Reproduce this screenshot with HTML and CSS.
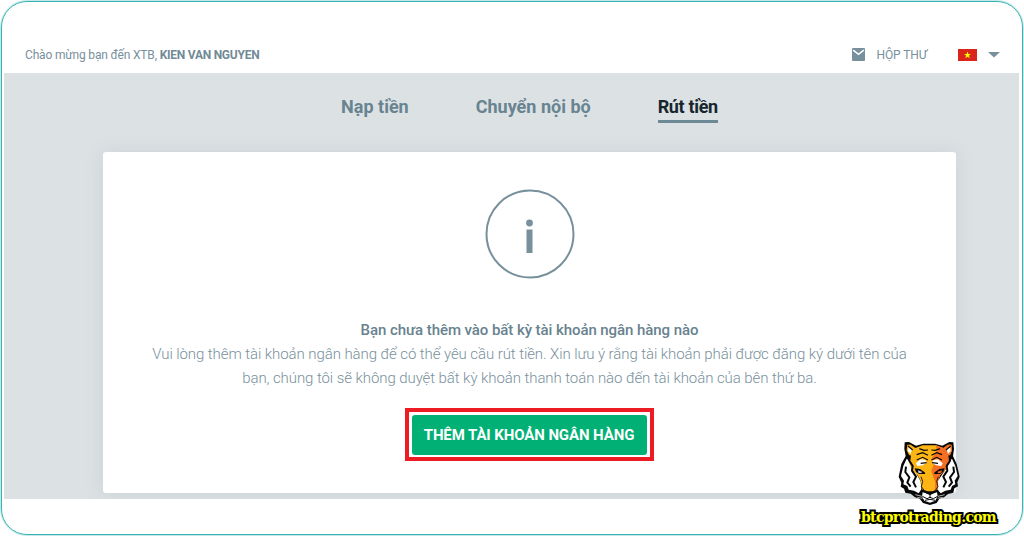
FILE: index.html
```html
<!DOCTYPE html>
<html lang="vi">
<head>
<meta charset="UTF-8">
<meta name="viewport" content="width=device-width, initial-scale=1.0">
<title>Rút tiền</title>
<link rel="stylesheet" href="styles.css">
</head>
<body>
<div class="frame">

  <!-- Top bar -->
  <header class="topbar">
    <div class="welcome">Chào mừng bạn đến XTB, <strong>KIEN VAN NGUYEN</strong></div>
    <div class="tools">
      <svg class="mail" width="13" height="13" viewBox="0 0 13 13">
        <rect width="13" height="13" rx="1" fill="#78909c"/>
        <path d="M1.2 2.2L6.5 6.4L11.8 2.2" fill="none" stroke="#fff" stroke-width="1.5"/>
      </svg>
      <span class="inbox">HỘP THƯ</span>
      <svg class="flag" width="19" height="12" viewBox="0 0 19 12">
        <rect width="19" height="12" fill="#da251d"/>
        <path d="M9.5 2.4L10.4 4.9L13 5L10.9 6.6L11.7 9.2L9.5 7.7L7.3 9.2L8.1 6.6L6 5L8.6 4.9Z" fill="#ff0"/>
      </svg>
      <svg class="caret" width="12" height="6" viewBox="0 0 12 6">
        <path d="M0 0H12L6 5.6Z" fill="#78909c"/>
      </svg>
    </div>
  </header>

  <!-- Content -->
  <main class="content">
    <nav class="tabs">
      <a class="tab">Nạp tiền</a>
      <a class="tab">Chuyển nội bộ</a>
      <a class="tab active">Rút tiền</a>
    </nav>
    <section class="card">
      <svg class="info" width="90" height="90" viewBox="0 0 90 90">
        <circle cx="45" cy="45" r="43.5" fill="none" stroke="#78909c" stroke-width="2"/>
        <circle cx="44.5" cy="34" r="3.4" fill="#78909c"/>
        <rect x="41.5" y="40.5" width="6" height="23.5" fill="#78909c"/>
      </svg>
      <h2>Bạn chưa thêm vào bất kỳ tài khoản ngân hàng nào</h2>
      <p>Vui lòng thêm tài khoản ngân hàng để có thể yêu cầu rút tiền. Xin lưu ý rằng tài khoản phải được đăng ký dưới tên của</p>
      <p>bạn, chúng tôi sẽ không duyệt bất kỳ khoản thanh toán nào đến tài khoản của bên thứ ba.</p>
      <div class="highlight">
        <button type="button">THÊM TÀI KHOẢN NGÂN HÀNG</button>
      </div>
    </section>
  </main>
</div>

<!-- Watermark -->
<div class="watermark">
  <svg class="tiger" width="80" height="72" viewBox="0 0 240 216">
    <path d="M44 19L57 18L78 29L100 23H135L157 29L178 18L190 19L192 39L189 60L200 84L209 122L202 139L204 151L193 157L190 170L174 174L162 184L148 188L140 201L120 207L99 201L89 188L75 184L62 173L46 170L42 158L32 152L34 140L26 122L34 84L47 60L43 39Z" fill="#080808"/>
    <!-- cheeks -->
    <path d="M50 68L60 78L66 96L78 112L92 136L94 160L86 172L72 164L56 161L52 150L40 145L42 134L33 120L40 90Z" fill="#fff"/>
    <path d="M186 68L176 78L170 96L160 110L144 134L142 160L152 172L166 164L182 161L186 150L196 145L194 134L203 120L196 90Z" fill="#fff"/>
    <!-- face -->
    <path d="M52 26L62 26L76 36L98 28H138L160 36L174 26L184 26L186 43L178 62L178 82L164 104L150 118L144 134L142 160L120 172L96 160L92 134L82 116L66 104L58 82L60 62L50 43Z" fill="#fdb515"/>
    <path d="M138 28L160 36L174 26L184 26L186 43L178 62L178 82L164 104L150 118L144 134L142 160L134 166L136 140L124 104L132 84L126 66L140 46Z" fill="#f36f21"/>
    <path d="M55 34L66 40L62 54L54 46ZM181 34L170 40L174 54L182 46Z" fill="#fff"/>
    <!-- brows -->
    <path d="M78 82L92 70L106 72L110 80L98 88L82 90ZM158 82L144 70L130 72L126 80L138 88L154 90Z" fill="#fff"/>
    <path d="M98 169L117 175H123L141 169L143 181L136 194L120 200L103 194L96 182Z" fill="#fff"/>
    <!-- stripes -->
    <path d="M54 30L68 42M182 30L168 42M88 38L102 43L114 42M150 38L136 43L124 42M80 56L98 50L114 58M156 56L140 50L124 58M80 72L98 64L114 72M156 72L140 64L124 72M92 82L110 80M144 82L126 80" fill="none" stroke="#080808" stroke-width="3.5"/>
    <path d="M60 58L58 74L68 90L66 104L78 122L70 138L78 154M178 58L180 74L170 90L172 104L160 122L168 138L160 154M48 92L46 108L58 124L52 140L62 152M190 92L192 108L180 124L186 140L176 152" fill="none" stroke="#080808" stroke-width="6"/>
    <!-- eyes -->
    <path d="M74 97L90 99L104 109L106 114L88 114L78 108ZM164 97L148 99L134 109L132 114L150 114L160 108Z" fill="#080808"/>
    <path d="M84 103L97 108L93 112L85 110Z" fill="#bcd9ff"/>
    <path d="M156 103L142 107L144 112L154 110ZM89 105L97 108L94 111Z" fill="#f26522"/>
    <path d="M93 122L98 136L94 152L104 165M145 122L140 136L144 152L135 165" fill="none" stroke="#080808" stroke-width="2.5"/>
    <!-- nose and mouth -->
    <path d="M104 163L113 166H127L136 163L129 173L120 177L110 173Z" fill="#080808"/>
    <path d="M120 174V184M97 181L111 188L120 184L130 188L143 181M105 193L120 190L135 193" fill="none" stroke="#080808" stroke-width="3"/>
    <path d="M76 176L96 181M82 184L97 187M164 176L144 181M158 184L143 187" fill="none" stroke="#fff" stroke-width="2"/>
  </svg>
  <div class="site">btcprotrading.com</div>
</div>
</body>
</html>
```
FILE: styles.css
```css
* {
  box-sizing: border-box;
}
body {
  margin: 0;
  width: 1024px;
  height: 536px;
  overflow: hidden;
  background: #fff;
  font-family: Roboto, "Liberation Sans", sans-serif;
  color: #78909c;
}
.frame {
  width: 1022px;
  height: 534px;
  margin: 1px;
  padding: 0 3px 0 2px;
  border: 1px solid #37b3b3;
  border-radius: 26px;
  box-shadow: 0 0 0 1px #c5e7e7;
}
.topbar {
  display: flex;
  justify-content: space-between;
  align-items: center;
  height: 71px;
  padding: 34px 19px 0 21px;
  font-size: 12px;
}
.welcome {
  letter-spacing: -0.17px;
}
.welcome strong {
  font-weight: 700;
  letter-spacing: -0.25px;
  color: #718a96;
}
.tools {
  display: flex;
  align-items: center;
}
.inbox {
  margin: 0 31px 0 12px;
  letter-spacing: -0.1px;
}
.caret {
  margin-left: 11px;
}
.content {
  height: 426px;
  overflow: hidden;
  background: #dce1e4;
}
.tabs {
  display: flex;
  justify-content: center;
  height: 78.5px;
  padding: 22px 0 0 36px;
  font-size: 18px;
  font-weight: 700;
  line-height: 24px;
}
.tab {
  height: 28px;
  margin-right: 67px;
  color: #688491;
  white-space: nowrap;
}
.tab.active {
  margin-right: 0;
  letter-spacing: -0.33px;
  color: #17262d;
  border-bottom: 3px solid #6d8996;
}
.card {
  display: flex;
  flex-direction: column;
  align-items: center;
  width: 853px;
  height: 341.5px;
  margin-left: 99px;
  padding-top: 37.5px;
  background: #fff;
  border-radius: 3px;
  box-shadow: 0 1px 20px rgba(84, 110, 122, 0.13);
}
.card h2 {
  margin: 39px 0 0;
  font-size: 15px;
  font-weight: 500;
  line-height: 24px;
  letter-spacing: -0.07px;
  color: #68828f;
}
.card p {
  margin: 0;
  font-size: 15px;
  font-weight: 300;
  line-height: 24px;
  letter-spacing: -0.08px;
  white-space: nowrap;
}
.highlight {
  width: 249px;
  height: 53px;
  margin: 18px 1px 0 0;
  padding: 3px;
  border: 4px solid #ed1c24;
}
.highlight button {
  display: block;
  width: 235px;
  height: 40px;
  padding: 0;
  border: 0;
  border-radius: 3px;
  background: #00b074;
  color: #fff;
  font-family: inherit;
  font-size: 15px;
  font-weight: 700;
  letter-spacing: -0.1px;
  white-space: nowrap;
}
.watermark {
  position: absolute;
  left: 850px;
  top: 436px;
  width: 157px;
}
.tiger {
  display: block;
  margin-left: 40px;
}
.site {
  text-align: center;
  font-family: "DejaVu Serif", serif;
  font-size: 14px;
  font-weight: 700;
  line-height: 18px;
  letter-spacing: -0.7px;
  color: #ff0;
  -webkit-text-stroke: 4px #000;
  paint-order: stroke fill;
}
```
